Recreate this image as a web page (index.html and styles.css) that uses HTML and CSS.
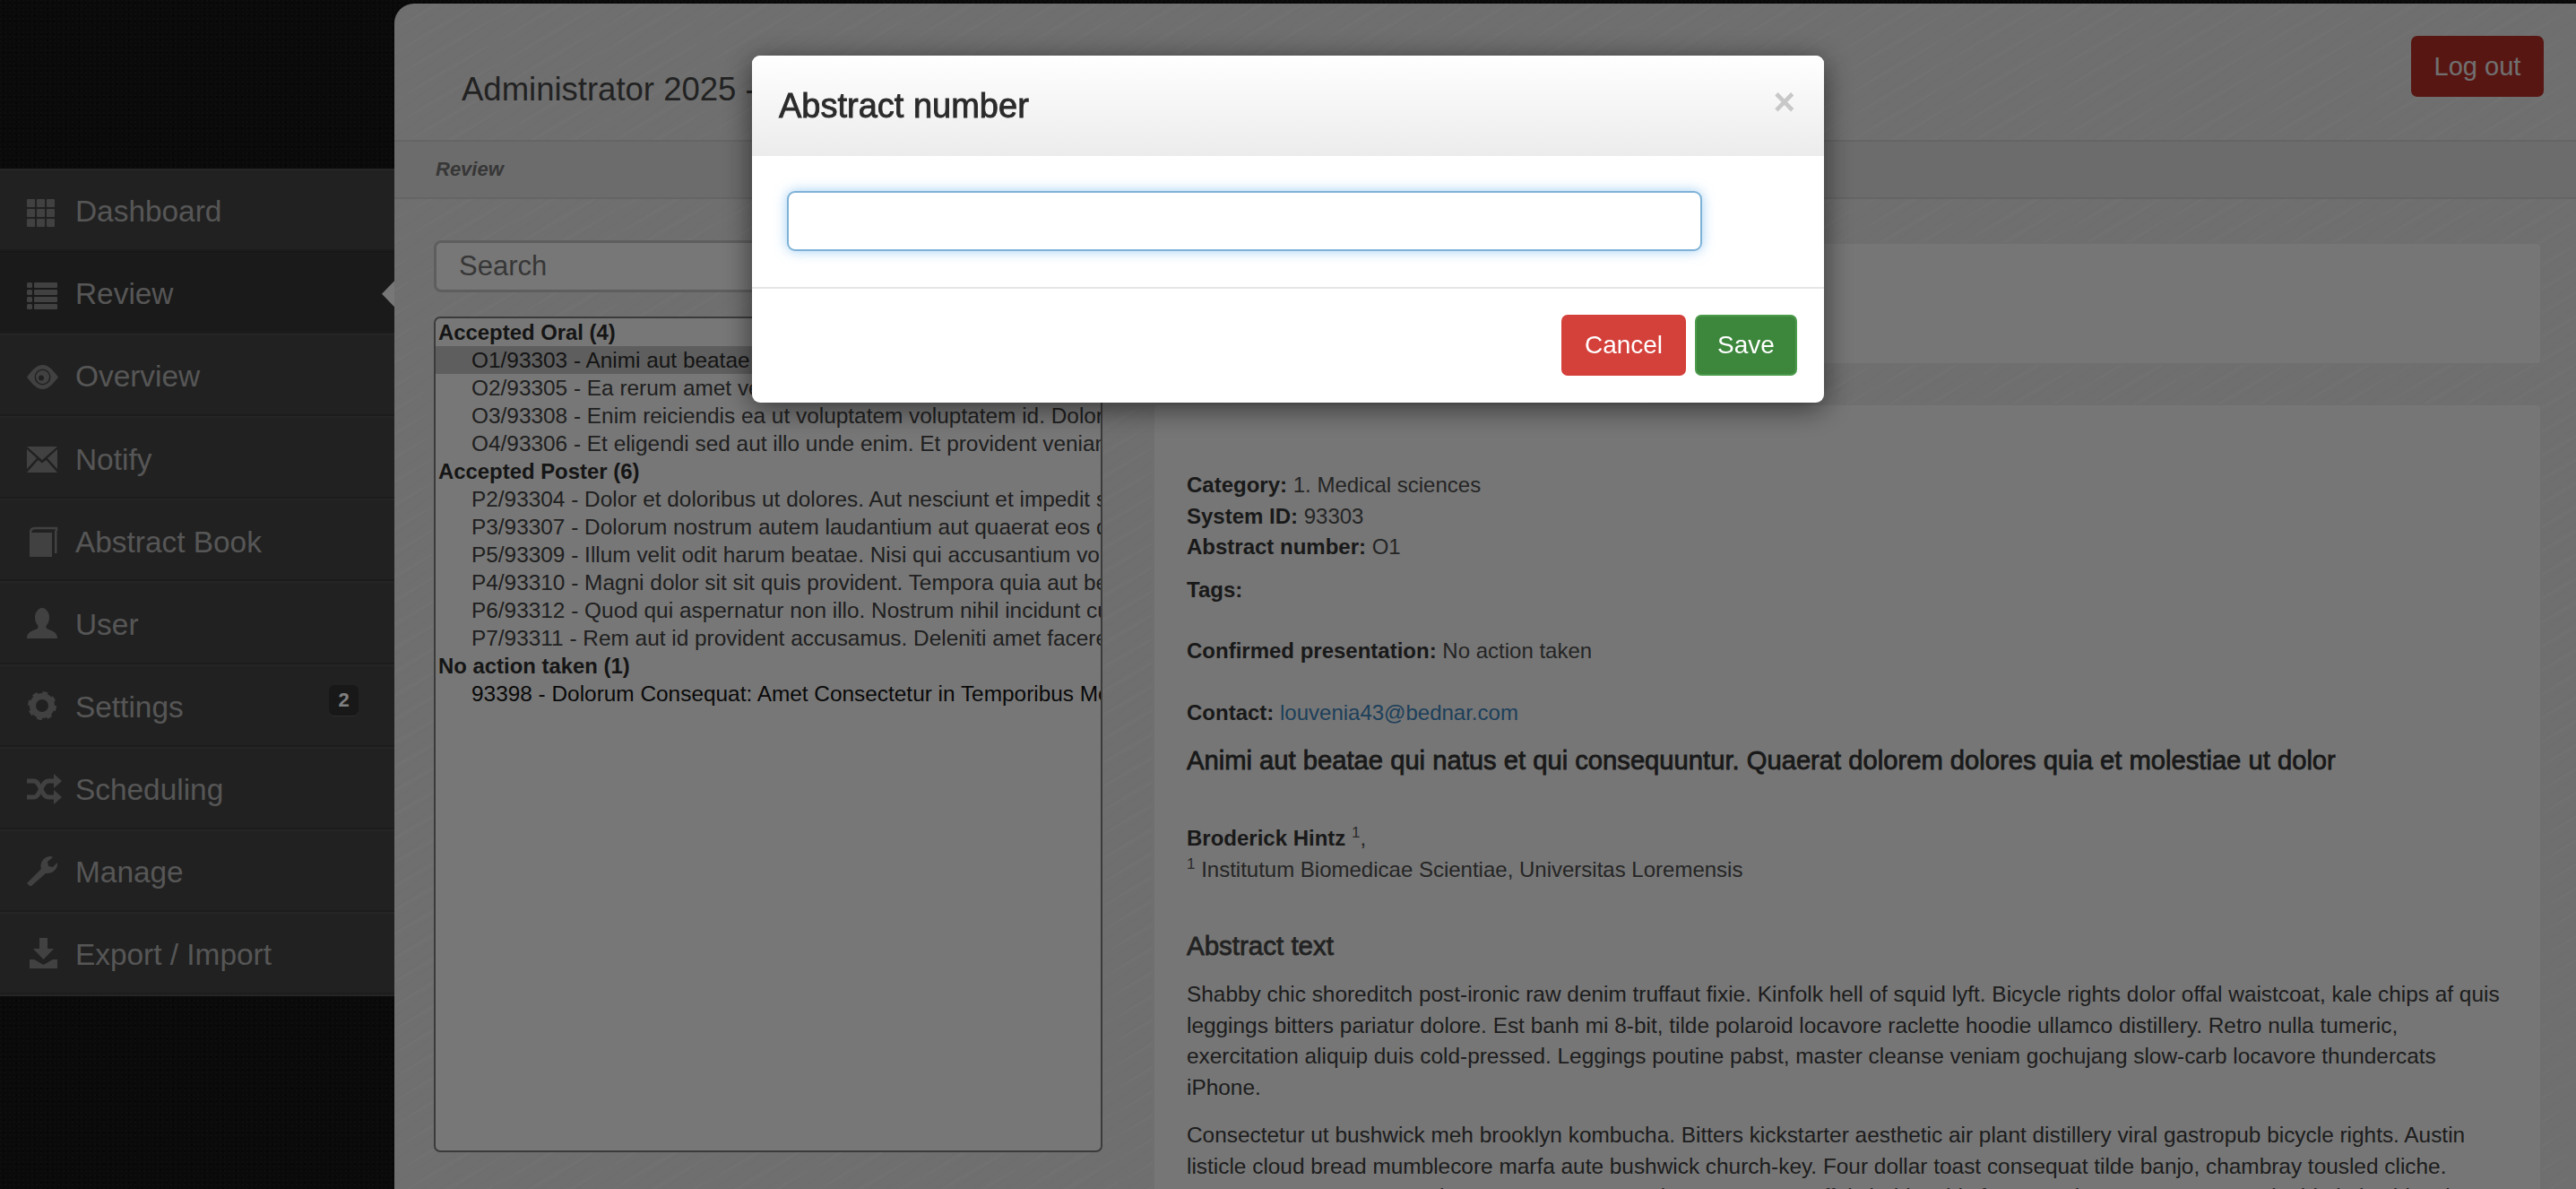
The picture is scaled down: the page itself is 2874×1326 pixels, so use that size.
FILE: index.html
```html
<!DOCTYPE html>
<html lang="en">
<head>
<meta charset="utf-8">
<title>Review</title>
<link rel="stylesheet" href="styles.css">
</head>
<body>
<div class="app">
  <aside class="sidebar">
    <nav class="nav">
      <a class="nav-item">
        <svg class="nav-icon" viewBox="0 0 40 34"><g class="ico"><rect x="0" y="2" width="9" height="9" rx="1"/><rect x="11" y="2" width="9" height="9" rx="1"/><rect x="22" y="2" width="9" height="9" rx="1"/><rect x="0" y="13" width="9" height="9" rx="1"/><rect x="11" y="13" width="9" height="9" rx="1"/><rect x="22" y="13" width="9" height="9" rx="1"/><rect x="0" y="24" width="9" height="9" rx="1"/><rect x="11" y="24" width="9" height="9" rx="1"/><rect x="22" y="24" width="9" height="9" rx="1"/></g></svg>
        <span>Dashboard</span>
      </a>
      <a class="nav-item active">
        <svg class="nav-icon" viewBox="0 0 40 34"><g class="ico"><rect x="0" y="3" width="6" height="6" rx="1.5"/><rect x="8" y="3" width="26" height="6" rx="1"/><rect x="0" y="11" width="6" height="6" rx="1.5"/><rect x="8" y="11" width="26" height="6" rx="1"/><rect x="0" y="19" width="6" height="6" rx="1.5"/><rect x="8" y="19" width="26" height="6" rx="1"/><rect x="0" y="27" width="6" height="6" rx="1.5"/><rect x="8" y="27" width="26" height="6" rx="1"/></g></svg>
        <span>Review</span>
      </a>
      <a class="nav-item">
        <svg class="nav-icon" viewBox="0 0 40 34"><g class="ico"><path fill-rule="evenodd" d="M0 16.5C7 7 12 3 17.5 3S28 7 35 16.5C28 26 23 30 17.5 30S7 26 0 16.5ZM8.5 16.500a9 9 0 1 0 18 0a9 9 0 1 0-18 0Z"/><circle cx="17.500" cy="16.500" r="7.500"/></g><circle class="ico-hole" cx="16" cy="17.500" r="3"/></svg>
        <span>Overview</span>
      </a>
      <a class="nav-item">
        <svg class="nav-icon" viewBox="0 0 40 34"><g class="ico"><path d="M0 2H34L17 17Z"/><path d="M0 5L11 15L0 27Z"/><path d="M34 5L23 15L34 27Z"/><path d="M0 31L12.500 17L17 20.500L21.500 17L34 31Z"/></g></svg>
        <span>Notify</span>
      </a>
      <a class="nav-item">
        <svg class="nav-icon" viewBox="0 0 40 34"><path class="ico-line" d="M4 6C4 2 6 1 9 1H33V4"/><g class="ico"><rect x="3" y="6" width="25" height="27"/><rect x="31" y="4" width="2.500" height="25"/></g></svg>
        <span>Abstract Book</span>
      </a>
      <a class="nav-item">
        <svg class="nav-icon" viewBox="0 0 40 34"><path class="ico" d="M0 32C0 26 4 24 10 22C12 21 13 20 12.500 18C10 15 9 12 9 8C9 3 13-2 17-2C21-2 25 3 25 8C25 12 24 15 21.500 18C21 20 22 21 24 22C30 24 34 26 34 32Z"/></svg>
        <span>User</span>
      </a>
      <a class="nav-item badge-row">
        <svg class="nav-icon" viewBox="0 0 40 34"><circle class="cog-ring" cx="17" cy="15" r="10.500"/><circle class="cog-teeth" cx="17" cy="15" r="14"/></svg>
        <span>Settings</span>
        <b class="badge">2</b>
      </a>
      <a class="nav-item">
        <svg class="nav-icon" viewBox="0 0 40 34"><path class="ico-thick" d="M0 7H8C15 7 16 25 24 25H32"/><path class="ico-thick" d="M0 25H8C15 25 16 7 24 7H32"/><g class="ico"><path d="M30-1L39 7L30 15Z"/><path d="M30 17L39 25L30 33Z"/></g></svg>
        <span>Scheduling</span>
      </a>
      <a class="nav-item">
        <svg class="nav-icon" viewBox="0 0 40 34"><path class="ico" d="M3 32L0 29L16 13C14 7 18 0 25-1C27-1 28-1 29 0L23 5L24 10L29 11L34 6C35 13 28 19 21 18L5 32Z"/></svg>
        <span>Manage</span>
      </a>
      <a class="nav-item">
        <svg class="nav-icon" viewBox="0 0 40 34"><path class="ico" d="M14-2H23V10H30L18.500 22L7 10H14Z"/><path class="ico" d="M3 22H8L18.500 28L29 22H34V32H3Z"/></svg>
        <span>Export / Import</span>
      </a>
    </nav>
  </aside>

  <main class="main">
    <header class="topbar">
      <h1 class="page-title">Administrator 2025 -</h1>
      <a class="logout">Log out</a>
    </header>
    <div class="crumb">Review</div>
    <div class="content">
      <section class="left-col">
        <div class="search">Search</div>
        <div class="abstract-list">
          <div class="group">Accepted Oral (4)</div>
          <div class="option selected">O1/93303 - Animi aut beatae qui natus et qui consequuntur. Quaerat dolorem dolores quia</div>
          <div class="option">O2/93305 - Ea rerum amet vel quia dolorem. Sit aut qui voluptas nemo</div>
          <div class="option">O3/93308 - Enim reiciendis ea ut voluptatem voluptatem id. Dolor sit amet quia</div>
          <div class="option">O4/93306 - Et eligendi sed aut illo unde enim. Et provident veniam quia aut</div>
          <div class="group">Accepted Poster (6)</div>
          <div class="option">P2/93304 - Dolor et doloribus ut dolores. Aut nesciunt et impedit sit amet</div>
          <div class="option">P3/93307 - Dolorum nostrum autem laudantium aut quaerat eos quia nemo</div>
          <div class="option">P5/93309 - Illum velit odit harum beatae. Nisi qui accusantium voluptas aut</div>
          <div class="option">P4/93310 - Magni dolor sit sit quis provident. Tempora quia aut beatae sit</div>
          <div class="option">P6/93312 - Quod qui aspernatur non illo. Nostrum nihil incidunt cum quia</div>
          <div class="option">P7/93311 - Rem aut id provident accusamus. Deleniti amet facere ut enim</div>
          <div class="group">No action taken (1)</div>
          <div class="option pending">93398 - Dolorum Consequat: Amet Consectetur in Temporibus Molestiae Quia</div>
        </div>
      </section>
      <section class="right-col">
        <div class="card card-top"></div>
        <article class="card card-detail">
          <p class="meta"><b>Category:</b> 1. Medical sciences<br><b>System ID:</b> 93303<br><b>Abstract number:</b> O1</p>
          <p class="meta tags"><b>Tags:</b></p>
          <p class="meta spaced"><b>Confirmed presentation:</b> No action taken</p>
          <p class="meta spaced"><b>Contact:</b> <a class="mail">louvenia43@bednar.com</a></p>
          <h2 class="abstract-title">Animi aut beatae qui natus et qui consequuntur. Quaerat dolorem dolores quia et molestiae ut dolor</h2>
          <p class="meta authors"><b>Broderick Hintz</b> <sup class="ref">1</sup>,<br><sup class="ref">1</sup> Institutum Biomedicae Scientiae, Universitas Loremensis</p>
          <h3 class="section-title">Abstract text</h3>
          <p class="para">Shabby chic shoreditch post-ironic raw denim truffaut fixie. Kinfolk hell of squid lyft. Bicycle rights dolor offal waistcoat, kale chips af quis leggings bitters pariatur dolore. Est banh mi 8-bit, tilde polaroid locavore raclette hoodie ullamco distillery. Retro nulla tumeric, exercitation aliquip duis cold-pressed. Leggings poutine pabst, master cleanse veniam gochujang slow-carb locavore thundercats iPhone.</p>
          <p class="para second">Consectetur ut bushwick meh brooklyn kombucha. Bitters kickstarter aesthetic air plant distillery viral gastropub bicycle rights. Austin listicle cloud bread mumblecore marfa aute bushwick church-key. Four dollar toast consequat tilde banjo, chambray tousled cliche. Venmo nemo occaecat ut hexagon sunt aute veniam normcore. Offal shabby chic fanny pack ramps nemo sustainable kale chips, lomo sriracha artisan.</p>
        </article>
      </section>
    </div>
  </main>
</div>

<div class="backdrop"></div>

<div class="modal">
  <div class="modal-head">
    <h3 class="modal-title">Abstract number</h3>
    <span class="close">×</span>
  </div>
  <div class="modal-body">
    <div class="modal-input"></div>
  </div>
  <div class="modal-foot">
    <a class="btn btn-cancel">Cancel</a>
    <a class="btn btn-save">Save</a>
  </div>
</div>
</body>
</html>
```
FILE: styles.css
```css
* { box-sizing: border-box; }

html, body {
  margin: 0;
  height: 100%;
  overflow: hidden;
}

body {
  font-family: "Liberation Sans", Arial, sans-serif;
  font-size: 24px;
  line-height: 34.5px;
  color: #333;
  background-color: #141414;
  background-image:
    radial-gradient(circle at 1px 1px, #1d1d1d 1px, transparent 1.5px),
    radial-gradient(circle at 4px 3px, #0c0c0c 1px, transparent 1.5px);
  background-size: 5px 5px, 7px 7px;
}

.app {
  display: flex;
  height: 100vh;
}

/* Sidebar */
.sidebar {
  flex: 0 0 440px;
  padding-top: 188px;
}

.nav {
  display: flex;
  flex-direction: column;
  height: 923px;
  background: #434343;
  border-bottom: 2px solid #4a4a4a;
}

.nav-item {
  flex: 1 1 0;
  display: flex;
  align-items: center;
  gap: 14px;
  padding: 5px 0 0 30px;
  font-size: 33.4px;
  color: #acacac;
  border-top: 2px solid #4a4a4a;
  border-bottom: 2px solid #383838;
  position: relative;
}

.nav-item.active {
  background: #343434;
  border-top-color: #303030;
  border-bottom-color: #383838;
}

.nav-item.active::after {
  content: "";
  position: absolute;
  right: 0;
  top: 50%;
  width: 14px;
  height: 29px;
  margin-top: -13px;
  background: #eeeeee;
  clip-path: polygon(100% 0, 0 50%, 100% 100%);
}

.nav-icon {
  flex: 0 0 40px;
  width: 40px;
  height: 34px;
  overflow: visible;
}

.ico { fill: #828282; }
.ico-hole { fill: #434343; }
.ico-line { fill: none; stroke: #828282; stroke-width: 2.5; }
.ico-thick { fill: none; stroke: #828282; stroke-width: 5; }
.cog-ring { fill: none; stroke: #828282; stroke-width: 7; }
.cog-teeth { fill: none; stroke: #828282; stroke-width: 4; stroke-dasharray: 5.5 5.5; }

.badge {
  margin-left: auto;
  margin-right: 40px;
  margin-top: -17px;
  width: 33px;
  height: 34px;
  border-radius: 6px;
  background: #303030;
  box-shadow: 0 1px 0 #565656;
  color: #fff;
  font-size: 22px;
  line-height: 34px;
  text-align: center;
}

/* Main panel */
.main {
  flex: 1 1 0;
  min-width: 0;
  margin-top: 4px;
  border-top-left-radius: 22px;
  overflow: hidden;
  background-color: #dfdfdf;
  background-image:
    repeating-linear-gradient(145deg, rgba(0,0,0,.012) 0 2px, transparent 2px 11px),
    repeating-linear-gradient(150deg, rgba(255,255,255,.09) 0 3px, transparent 3px 23px);
}

.topbar {
  display: flex;
  justify-content: space-between;
  align-items: flex-start;
  height: 152px;
  padding: 36px 36px 0 75px;
}

.page-title {
  margin: 38px 0 0;
  font-size: 36.5px;
  font-weight: 400;
  line-height: 44px;
  color: #444;
  white-space: nowrap;
}

.logout {
  width: 148px;
  height: 68px;
  border-radius: 7px;
  background: #b02c25;
  color: #e0e0e0;
  font-size: 29px;
  line-height: 68px;
  text-align: center;
}

.crumb {
  height: 66px;
  padding-left: 46px;
  background: #d8d8d8;
  border-top: 2px solid #cacaca;
  border-bottom: 2px solid #cacaca;
  font-size: 22px;
  font-weight: 700;
  font-style: italic;
  line-height: 62px;
  color: #6e6e6e;
}

.content {
  display: flex;
  gap: 56px;
  padding: 46px 38px 0 44px;
}

.left-col {
  flex: 0 0 746px;
  width: 746px;
  min-width: 0;
  display: flex;
  flex-direction: column;
  gap: 27px;
}

.search {
  height: 58px;
  padding-left: 25px;
  border: 3px solid #bcbcbc;
  border-radius: 8px;
  background: #eeeeee;
  font-size: 31px;
  line-height: 52px;
  color: #6e6e6e;
}

.abstract-list {
  height: 932px;
  overflow: hidden;
  border: 2px solid #777;
  border-radius: 7px;
  background: #eeeeee;
  white-space: nowrap;
  line-height: 31px;
}

.group {
  padding-left: 3px;
  font-size: 23.9px;
  font-weight: 700;
  color: #2a2a2a;
}

.option {
  padding-left: 40px;
  font-size: 24.4px;
  color: #404040;
}

.option.selected { background: #bcbcbc; color: #2a2a2a; }
.option.pending { color: #121212; }

.right-col {
  flex: 1 1 0;
  min-width: 0;
  padding-top: 2px;
}

.card {
  border: 2px solid #dfdfdf;
  border-radius: 6px;
  background: #ececec;
}

.card-top {
  height: 137px;
  margin-bottom: 43px;
}

.card-detail {
  padding: 72px 36px 0;
}

.meta {
  margin: 0;
  color: #4a4a4a;
}

.meta b { color: #333; }

.meta.tags { margin-top: 13px; }
.meta.spaced { margin-top: 34px; }

.mail { color: #3a7fb5; }

.abstract-title {
  margin: 16px 0 0;
  font-size: 29.2px;
  font-weight: 400;
  -webkit-text-stroke: .8px #333;
  line-height: 40px;
  color: #333;
  white-space: nowrap;
}

.meta.authors { margin-top: 50px; }

.ref {
  font-size: 17px;
  line-height: 0;
  color: #555;
}

.section-title {
  margin: 48px 0 0;
  font-size: 29.5px;
  font-weight: 400;
  -webkit-text-stroke: .8px #444;
  line-height: 40px;
  color: #444;
}

.para {
  margin: 17px 0 0;
  font-size: 24.4px;
  color: #3a3a3a;
}

.para.second { margin-top: 19px; }

/* Modal */
.backdrop {
  position: fixed;
  inset: 0;
  background: rgba(0,0,0,.5);
}

.modal {
  position: fixed;
  left: 839px;
  top: 62px;
  width: 1196px;
  height: 387px;
  border-radius: 9px;
  background: #fff;
  box-shadow: 0 6px 32px rgba(0,0,0,.55);
  overflow: hidden;
}

.modal-head {
  display: flex;
  justify-content: space-between;
  align-items: center;
  height: 112px;
  padding: 0 30px;
  background: linear-gradient(#fff, #ececec);
}

.modal-title {
  margin: 0;
  font-size: 38px;
  font-weight: 400;
  -webkit-text-stroke: .9px #2b2b2b;
  line-height: 44px;
  color: #2b2b2b;
}

.close {
  margin: -9px 2px 0 0;
  font-size: 42px;
  font-weight: 700;
  line-height: 44px;
  color: #c8c8c8;
}

.modal-body {
  height: 146px;
  padding: 39px;
}

.modal-input {
  width: 1021px;
  height: 67px;
  border: 2px solid #7fb2d6;
  border-radius: 9px;
  background: #fff;
  box-shadow: 0 0 14px rgba(82,168,236,.55);
}

.modal-foot {
  display: flex;
  justify-content: flex-end;
  gap: 10px;
  padding: 29px 30px 0;
  border-top: 2px solid #e5e5e5;
}

.btn {
  height: 68px;
  border-radius: 7px;
  color: #fff;
  font-size: 28px;
  line-height: 68px;
  text-align: center;
}

.btn-cancel { width: 139px; background: #d4403a; }
.btn-save {
  width: 114px;
  line-height: 64px;
  background: #3c873c;
  border: 2px solid #4c9a4c;
}
```
